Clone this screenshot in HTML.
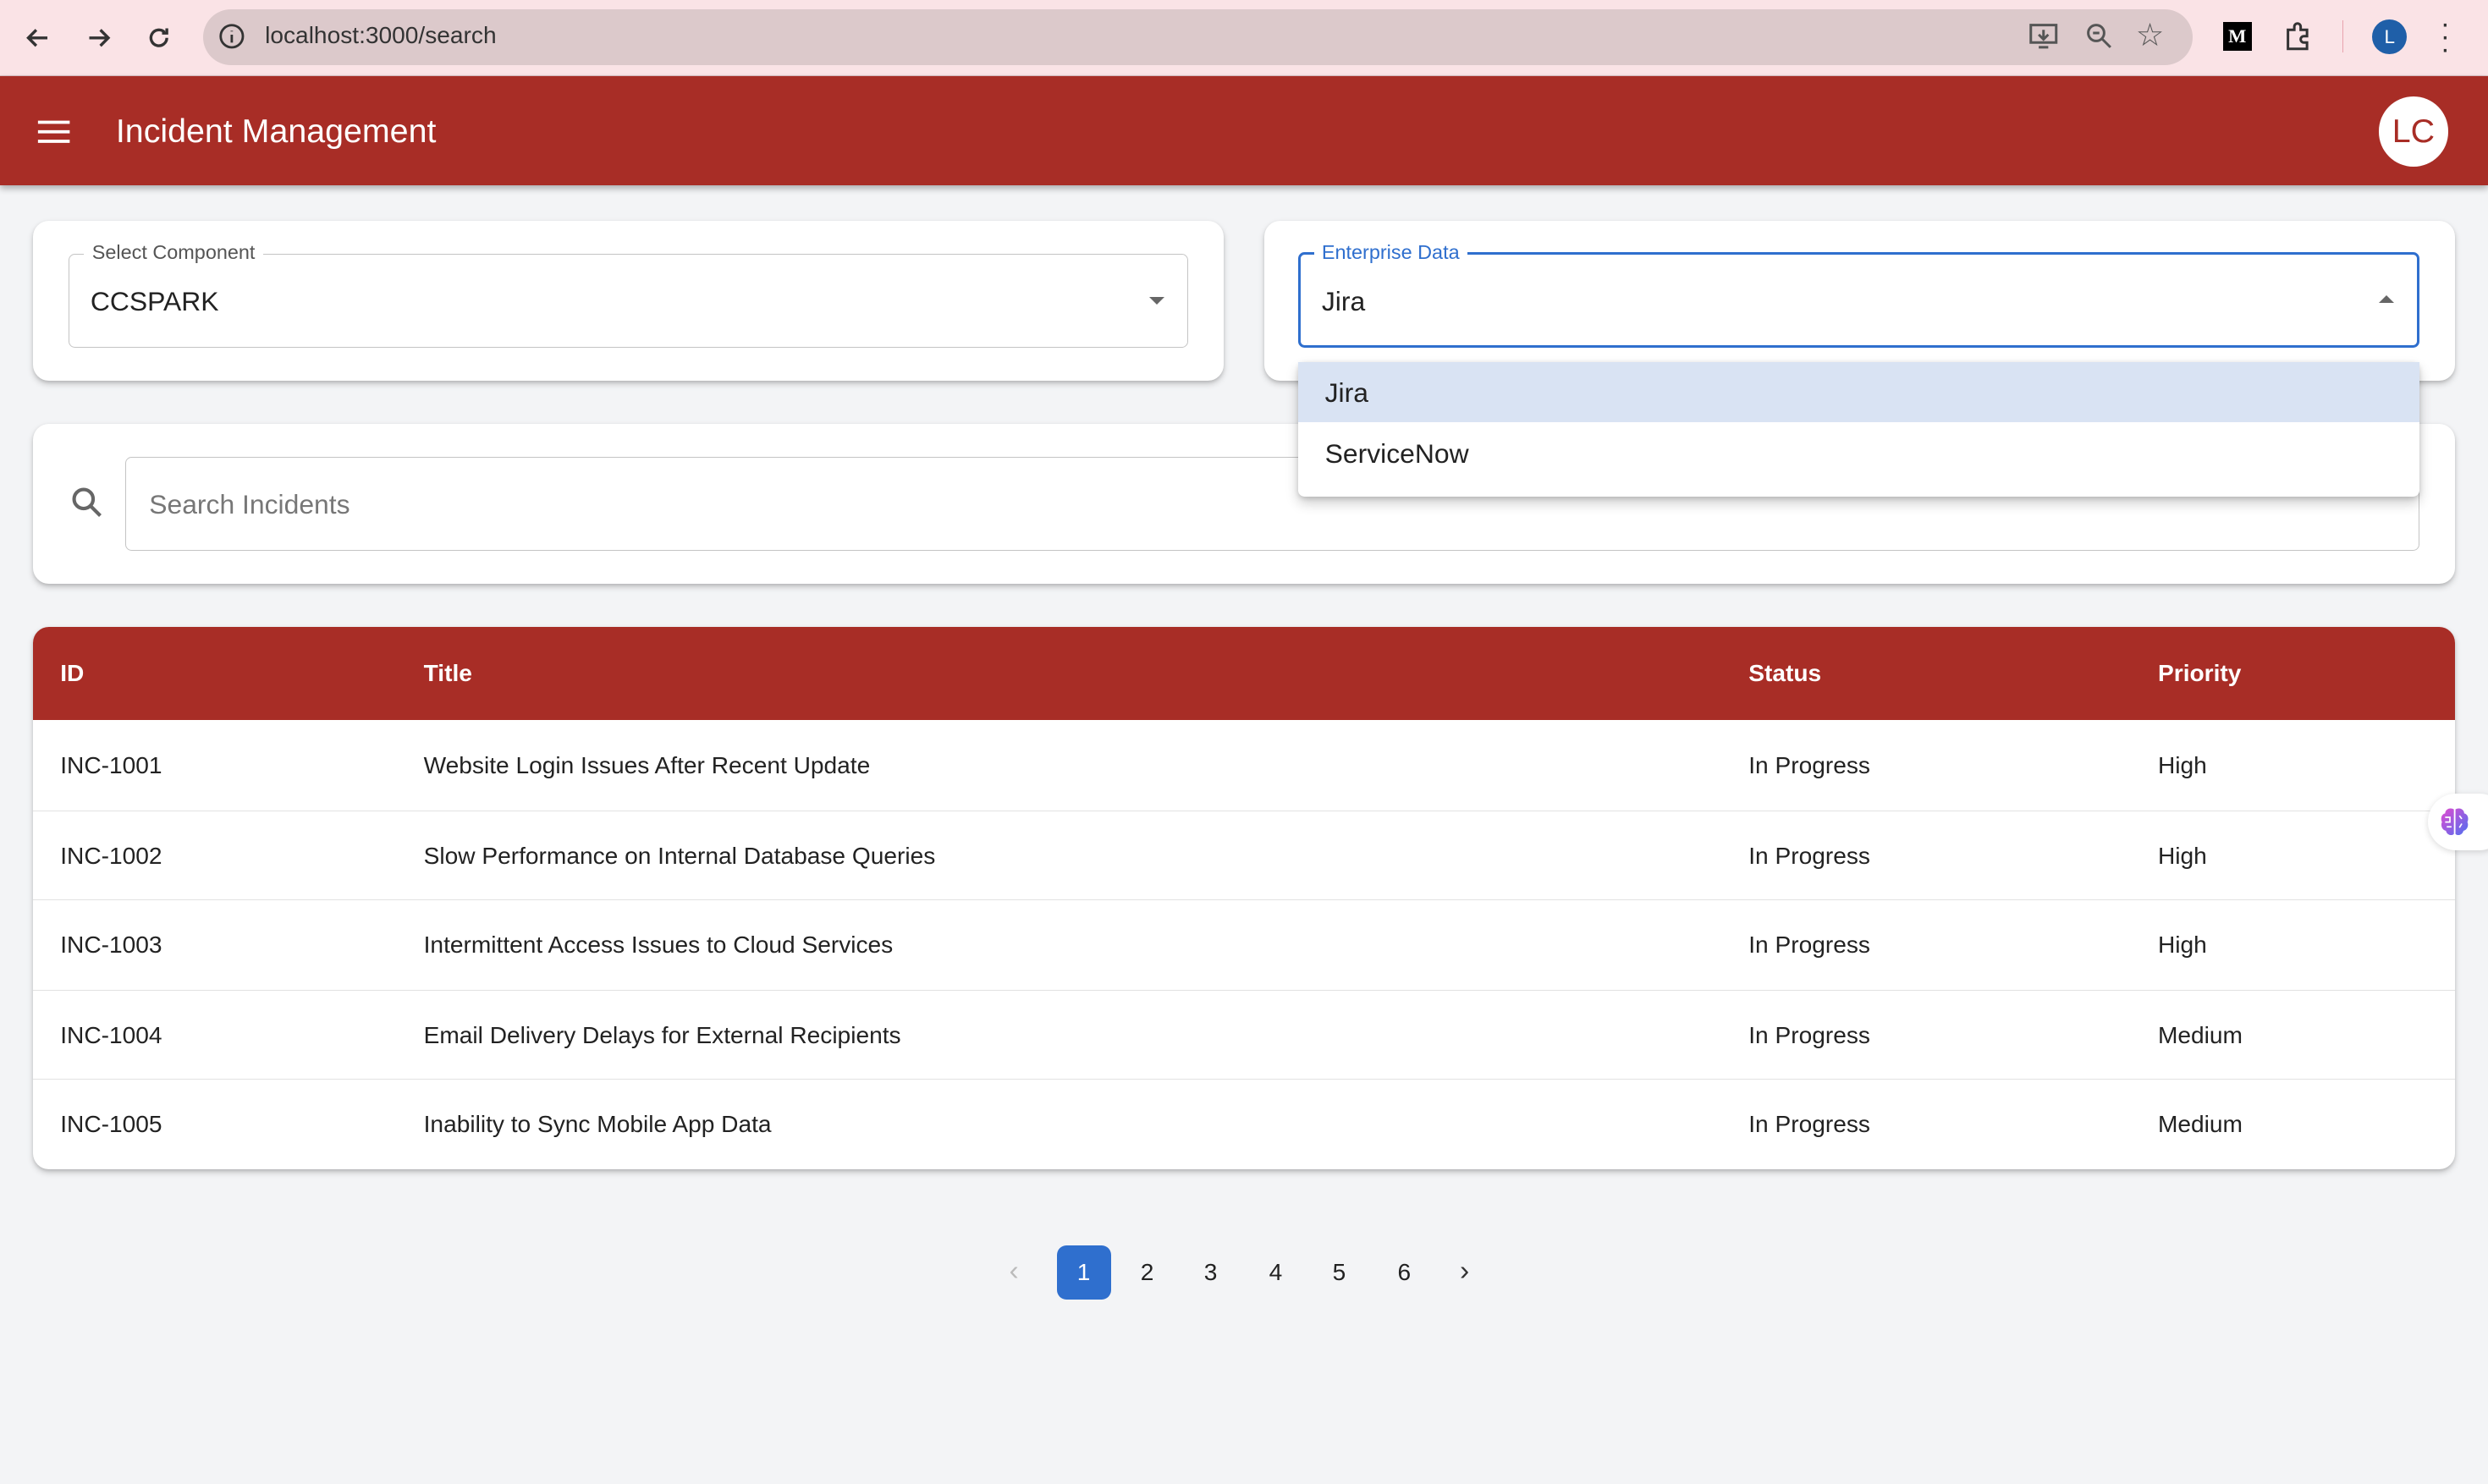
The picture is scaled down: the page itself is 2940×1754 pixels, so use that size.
<!DOCTYPE html>
<html><head><style>
*{box-sizing:border-box;margin:0;padding:0}
html,body{width:2940px;height:1754px;overflow:hidden;background:#f3f4f6}
#r{zoom:1.875;width:1568px;height:935px;position:relative;font-family:"Liberation Sans",sans-serif;color:#222}
.a{position:absolute}
.card{position:absolute;background:#fff;border-radius:10px;box-shadow:0 2px 4px rgba(0,0,0,.18),0 1px 2px rgba(0,0,0,.1)}
.row{position:absolute;left:0;right:0;height:57px;border-top:1px solid #e2e2e2;font-size:15px}
.row span,.hd span{position:absolute;top:50%;transform:translateY(-50%)}
.pg{position:absolute;top:785px;width:34px;height:34px;line-height:34px;text-align:center;font-size:15px;border-radius:6px}
</style></head><body><div id="r">
<div class="a" style="left:0;top:0;width:1568px;height:48px;background:#fae3e6;border-bottom:1px solid #d8bfc2"></div>
<div class="a" style="left:128px;top:6px;width:1254px;height:35px;border-radius:18px;background:#dcc9cb"></div>
<svg class="a" style="left:14px;top:14px" width="20" height="20" viewBox="0 0 20 20" fill="none" stroke="#333" stroke-width="1.8"><path d="M16 10H4M9 5L4 10l5 5"/></svg>
<svg class="a" style="left:52px;top:14px" width="20" height="20" viewBox="0 0 20 20" fill="none" stroke="#333" stroke-width="1.8"><path d="M4 10h12M11 5l5 5-5 5"/></svg>
<svg class="a" style="left:90px;top:14px" width="20" height="20" viewBox="0 0 20 20" fill="none" stroke="#333" stroke-width="1.8"><path d="M15 10a5 5 0 1 1-1.5-3.6M15 4v3h-3"/></svg>
<svg class="a" style="left:137px;top:14px" width="18" height="18" viewBox="0 0 18 18" fill="none" stroke="#333" stroke-width="1.5"><circle cx="9" cy="9" r="7"/><path d="M9 8v5M9 5.5v.5"/></svg>
<div class="a" style="left:167px;top:14px;font-size:15px;color:#333">localhost:3000/search</div>
<svg class="a" style="left:1278px;top:13px" width="20" height="20" viewBox="0 0 20 20" fill="none" stroke="#555" stroke-width="1.6"><rect x="2" y="3" width="16" height="11"/><path d="M10 6v6M7 9l3 3 3-3M7 17h6"/></svg>
<svg class="a" style="left:1313px;top:13px" width="20" height="20" viewBox="0 0 20 20" fill="none" stroke="#555" stroke-width="1.6"><circle cx="8" cy="8" r="5"/><path d="M12 12l5 5M6 8h4"/></svg>
<div class="a" style="left:1346px;top:10px;font-size:20px;color:#555">☆</div>
<div class="a" style="left:1401px;top:14px;width:18px;height:18px;background:#000;color:#fff;font:bold 12px 'Liberation Serif',serif;text-align:center;line-height:18px">M</div>
<svg class="a" style="left:1439px;top:13px" width="20" height="20" viewBox="0 0 20 20" fill="none" stroke="#333" stroke-width="1.6"><path d="M3 6h4V4a2 2 0 0 1 4 0v2h4v4h-2a2 2 0 0 0 0 4h2v4H3z"/></svg>
<div class="a" style="left:1476px;top:13px;width:1px;height:20px;background:#e8a3ad"></div>
<div class="a" style="left:1495px;top:12px;width:22px;height:22px;border-radius:50%;background:#1f5fa8;color:#fff;font-size:12px;text-align:center;line-height:22px">L</div>
<div class="a" style="left:1538px;top:11px;font-size:18px;color:#333;line-height:8px">·<br>·<br>·</div>
<div class="a" style="left:0;top:48px;width:1568px;height:69px;background:#a82d26;box-shadow:0 2px 4px rgba(0,0,0,.3)"></div>
<svg class="a" style="left:23px;top:73px" width="22" height="20" viewBox="0 0 22 20" fill="#fff"><rect x="1" y="3" width="20" height="2"/><rect x="1" y="9" width="20" height="2"/><rect x="1" y="15" width="20" height="2"/></svg>
<div class="a" style="left:73px;top:71px;font-size:21px;color:#fff">Incident Management</div>
<div class="a" style="left:1499px;top:61px;width:44px;height:44px;border-radius:50%;background:#fff;color:#a82d26;font-size:21px;text-align:center;line-height:44px">LC</div>
<div class="card" style="left:21px;top:139px;width:750px;height:101px"></div>
<div class="a" style="left:43px;top:160px;width:706px;height:59px;border:1px solid #c4c4c4;border-radius:4px"></div>
<div class="a" style="left:53px;top:152px;background:#fff;padding:0 5px;font-size:12.5px;color:#555">Select Component</div>
<div class="a" style="left:57px;top:180px;font-size:17px">CCSPARK</div>
<div class="a" style="left:724px;top:187px;border:5px solid transparent;border-top-color:#666;border-bottom:0"></div>
<div class="card" style="left:797px;top:139px;width:750px;height:101px"></div>
<div class="a" style="left:818px;top:159px;width:707px;height:60px;border:2px solid #2f6fce;border-radius:4px"></div>
<div class="a" style="left:828px;top:152px;background:#fff;padding:0 5px;font-size:12.5px;color:#2f6fce">Enterprise Data</div>
<div class="a" style="left:833px;top:180px;font-size:17px">Jira</div>
<div class="a" style="left:1499px;top:186px;border:5px solid transparent;border-bottom-color:#666;border-top:0"></div>
<div class="card" style="left:21px;top:267px;width:1526px;height:101px"></div>
<svg class="a" style="left:43px;top:305px" width="24" height="24" viewBox="0 0 24 24" fill="none" stroke="#666" stroke-width="2.2"><circle cx="9.5" cy="9.5" r="6"/><path d="M14 14l6 6"/></svg>
<div class="a" style="left:79px;top:288px;width:1446px;height:59px;border:1px solid #c4c4c4;border-radius:4px"></div>
<div class="a" style="left:94px;top:308px;font-size:17px;color:#777">Search Incidents</div>
<div class="a" style="left:818px;top:228px;width:707px;height:85px;background:#fff;border-radius:4px;box-shadow:0 4px 8px rgba(0,0,0,.2),0 1px 3px rgba(0,0,0,.15)"></div>
<div class="a" style="left:818px;top:228px;width:707px;height:38px;background:#d9e3f3"></div>
<div class="a" style="left:835px;top:238px;font-size:17px">Jira</div>
<div class="a" style="left:835px;top:276px;font-size:17px">ServiceNow</div>
<div class="card" style="left:21px;top:395px;width:1526px;height:342px;overflow:hidden">
<div class="hd a" style="left:0;top:0;width:1526px;height:59px;background:#a82d26;color:#fff;font-weight:bold;font-size:15px"><span style="left:17px">ID</span><span style="left:246px">Title</span><span style="left:1081px">Status</span><span style="left:1339px">Priority</span></div>
<div class="row" style="top:59px;border-top:0"><span style="left:17px">INC-1001</span><span style="left:246px">Website Login Issues After Recent Update</span><span style="left:1081px">In Progress</span><span style="left:1339px">High</span></div>
<div class="row" style="top:116px"><span style="left:17px">INC-1002</span><span style="left:246px">Slow Performance on Internal Database Queries</span><span style="left:1081px">In Progress</span><span style="left:1339px">High</span></div>
<div class="row" style="top:172px"><span style="left:17px">INC-1003</span><span style="left:246px">Intermittent Access Issues to Cloud Services</span><span style="left:1081px">In Progress</span><span style="left:1339px">High</span></div>
<div class="row" style="top:229px"><span style="left:17px">INC-1004</span><span style="left:246px">Email Delivery Delays for External Recipients</span><span style="left:1081px">In Progress</span><span style="left:1339px">Medium</span></div>
<div class="row" style="top:285px"><span style="left:17px">INC-1005</span><span style="left:246px">Inability to Sync Mobile App Data</span><span style="left:1081px">In Progress</span><span style="left:1339px">Medium</span></div>
</div>
<div class="a" style="left:1530px;top:500px;width:50px;height:36px;border-radius:18px;background:#fff;box-shadow:0 1px 4px rgba(0,0,0,.15)"></div>
<svg class="a" style="left:1536px;top:507px" width="22" height="22" viewBox="0 0 22 22"><defs><linearGradient id="g" x1="0" y1="0" x2="1" y2="1"><stop offset="0" stop-color="#e24bd0"/><stop offset="1" stop-color="#4f6ff0"/></linearGradient></defs><path d="M10.5 3C8 1.5 5 3 5 5.5 2.5 6 2 9 3 11c-1 2 0 5 2.5 5.5.5 2.5 3.5 3.5 5 2zM11.5 3c2.5-1.5 5.5 0 5.5 2.5 2.5.5 3 3.5 2 5.5 1 2 0 5-2.5 5.5-.5 2.5-3.5 3.5-5 2z" fill="url(#g)"/><path d="M5 8h3v3H5M6 14h3M14 7l1.5 2M15.5 12l-1.5 2.5" stroke="#fff" stroke-width=".9" fill="none"/></svg>
<div class="a" style="left:636px;top:791px;font-size:18px;color:#bbb">‹</div>
<div class="pg" style="left:666px;background:#2f6fce;color:#fff">1</div>
<div class="pg" style="left:706px">2</div>
<div class="pg" style="left:746px">3</div>
<div class="pg" style="left:787px">4</div>
<div class="pg" style="left:827px">5</div>
<div class="pg" style="left:868px">6</div>
<div class="a" style="left:920px;top:791px;font-size:18px;color:#333">›</div>
</div></body></html>
